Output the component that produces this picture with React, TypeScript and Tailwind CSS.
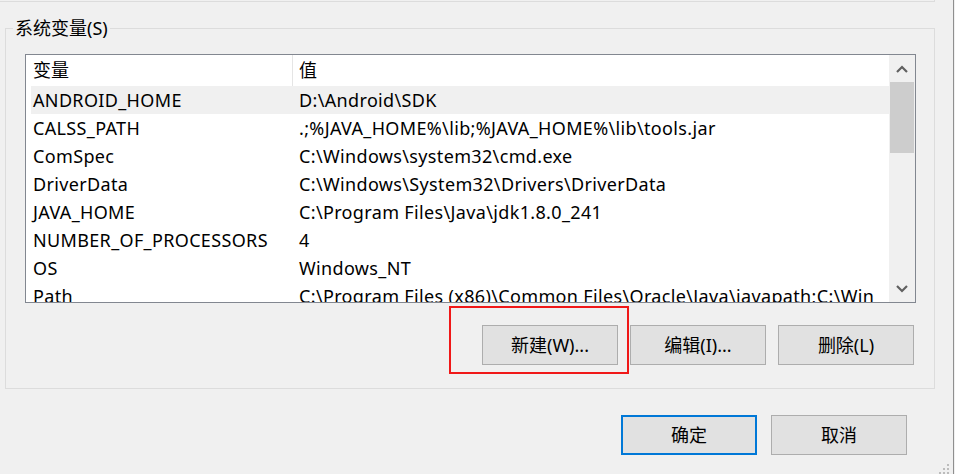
import React from 'react';

const rows: [string, string][] = [
  ['ANDROID_HOME', 'D:\\Android\\SDK'],
  ['CALSS_PATH', '.;%JAVA_HOME%\\lib;%JAVA_HOME%\\lib\\tools.jar'],
  ['ComSpec', 'C:\\Windows\\system32\\cmd.exe'],
  ['DriverData', 'C:\\Windows\\System32\\Drivers\\DriverData'],
  ['JAVA_HOME', 'C:\\Program Files\\Java\\jdk1.8.0_241'],
  ['NUMBER_OF_PROCESSORS', '4'],
  ['OS', 'Windows_NT'],
  ['Path', 'C:\\Program Files (x86)\\Common Files\\Oracle\\Java\\javapath;C:\\Win'],
];

const font = "font-['Noto_Sans','Noto_Sans_CJK_SC',sans-serif]";

const Chevron: React.FC<{ up?: boolean }> = ({ up }) => (
  <svg width="12" height="8" viewBox="0 0 12 8">
    <path d={up ? 'M1 7 L6 2 L11 7' : 'M1 1 L6 6 L11 1'} fill="none" stroke="#606060" strokeWidth="2.2" />
  </svg>
);

const Button: React.FC<{ label: string; primary?: boolean }> = ({ label, primary }) => (
  <button
    className={
      primary
        ? 'w-[136px] h-[40px] bg-[#e1e1e1] border-2 border-[#0078d7] text-[18px] text-black flex items-center justify-center'
        : 'w-[136px] h-[40px] bg-[#e1e1e1] border border-[#adadad] text-[18px] text-black flex items-center justify-center'
    }
  >
    {label}
  </button>
);

export default function App() {
  return (
    <div className={`w-[955px] h-[474px] bg-[#f0f0f0] overflow-hidden ${font}`}>
      <div className="relative w-[954px] h-full border-r border-[#8f8f8f]">
        {/* edge of the group above */}
        <div className="w-[935px] h-[2px] border-b border-r border-[#dcdcdc]" />

        {/* 系统变量 group */}
        <div className="relative mt-[26px] ml-[5px] w-[930px] h-[361px] border border-[#dcdcdc]">
          <span className="absolute left-[7px] top-[-13px] px-[2px] bg-[#f0f0f0] text-[18px] leading-[24px] text-black">
            系统变量(S)
          </span>

          <div className="mt-[25px] ml-[19px] w-[891px] h-[249px] border border-[#828790] bg-white flex">
            <div className="flex-1 overflow-hidden">
              <div className="flex h-[31px] items-center text-[18px] text-black">
                <div className="w-[267px] h-full pl-[7px] border-r border-[#e5e5e5] flex items-center">变量</div>
                <div className="pl-[6px]">值</div>
              </div>
              {rows.map(([name, value], i) => (
                <div
                  key={name}
                  className={
                    i === 0
                      ? 'ml-[5px] flex h-[28px] items-center bg-[#f0f0f0] text-[18px] tracking-[0.35px] text-black whitespace-nowrap'
                      : 'ml-[5px] flex h-[28px] items-center text-[18px] tracking-[0.35px] text-black whitespace-nowrap'
                  }
                >
                  <div className="w-[261px] shrink-0 pl-[2px]">{name}</div>
                  <div className="pl-[7px]">{value}</div>
                </div>
              ))}
            </div>
            <div className="w-[26px] shrink-0 bg-[#f0f0f0] flex flex-col">
              <div className="h-[27px] flex items-center justify-center">
                <Chevron up />
              </div>
              <div className="mx-[1px] h-[71px] bg-[#cdcdcd]" />
              <div className="flex-1" />
              <div className="h-[27px] flex items-center justify-center">
                <Chevron />
              </div>
            </div>
          </div>

          <div className="mt-[22px] mr-[20px] flex justify-end gap-[12px]">
            <Button label="新建(W)..." />
            <Button label="编辑(I)..." />
            <Button label="删除(L)" />
          </div>

          {/* red highlight annotation */}
          <div className="absolute left-[443px] top-[277px] w-[180px] h-[68px] border-2 border-[#f01818]" />
        </div>

        <div className="mt-[26px] mr-[46px] flex justify-end gap-[14px]">
          <Button label="确定" primary />
          <Button label="取消" />
        </div>

        {/* size grip */}
        <div className="absolute right-[4px] bottom-[0px] grid grid-cols-3 gap-[2px]">
          <span />
          <span />
          <span className="w-[2px] h-[2px] bg-[#bcbcbc]" />
          <span />
          <span className="w-[2px] h-[2px] bg-[#bcbcbc]" />
          <span className="w-[2px] h-[2px] bg-[#bcbcbc]" />
          <span className="w-[2px] h-[2px] bg-[#bcbcbc]" />
          <span className="w-[2px] h-[2px] bg-[#bcbcbc]" />
          <span className="w-[2px] h-[2px] bg-[#bcbcbc]" />
        </div>
      </div>
    </div>
  );
}
